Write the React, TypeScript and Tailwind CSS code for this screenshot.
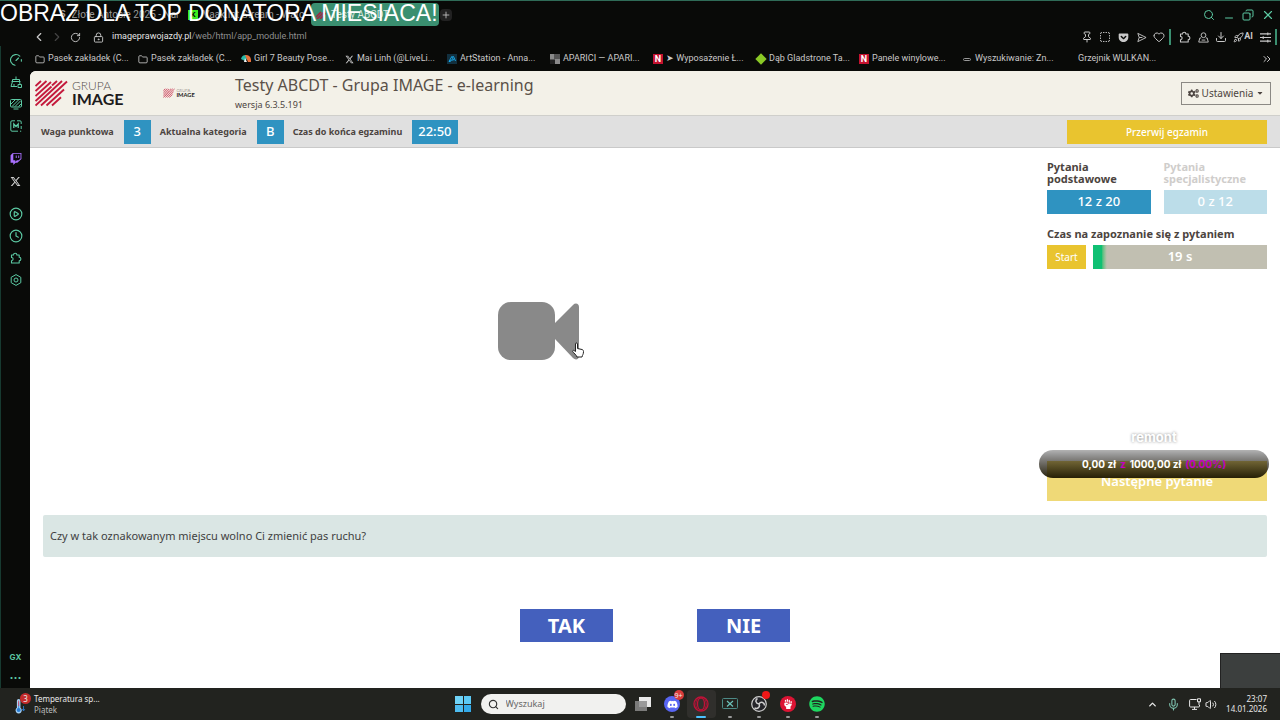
import type { ReactNode } from "react";
import {
  Search, Minus, Copy, X, ChevronLeft, ChevronRight, RotateCw, LockKeyhole, Folder, Pin, SquareDashed,
  Heart, Download, ChevronsRight, CirclePlay, Clock, ChevronUp, Mic, Volume2, Plus, Rocket,
} from "lucide-react";
import { FaCogs, FaCaretDown, FaDiscord, FaSpotify, FaTwitch, FaGetPocket } from "react-icons/fa";
import { FaXTwitter, FaHandFist } from "react-icons/fa6";

function IconButton({ label, className, children }: { label: string; className?: string; children: ReactNode }) {
  return (
    <button type="button" aria-label={label} className={`flex shrink-0 items-center justify-center ${className ?? ""}`}>
      {children}
    </button>
  );
}

function GaugeIcon() {
  return (
    <svg viewBox="0 0 12 12" className="size-3" fill="none" stroke="currentColor" strokeWidth="1.100" strokeLinecap="round">
      <path d="M5 11.300A5.400 5.400 0 1 1 9.800 2.200M6 6.500 8.500 4M11.300 5.500a5.400 5.400 0 0 1 0 1.800" />
    </svg>
  );
}

function BroomIcon() {
  return (
    <svg viewBox="0 0 12 12" className="size-3" fill="none" stroke="currentColor" strokeWidth="1">
      <path d="M6 .5v3M2.500 5.500v-2h7v2M1.500 5.500h9M2.500 5.500 1 10.500h6M4 8v2.500M9.500 5.500l.5 2.500M8 8.500h3.500v3H8z" />
    </svg>
  );
}

function WallpaperIcon() {
  return (
    <svg viewBox="0 0 12 12" className="size-3" fill="none" stroke="currentColor" strokeWidth="1">
      <rect x=".5" y="1.500" width="11" height="7.500" rx="1" />
      <path d="m1 6 4-4M2 8.500 8.500 2M5 8.500l6-6M8.500 8.500 11 6M3.500 11h5" />
    </svg>
  );
}

function ModIcon() {
  return (
    <svg viewBox="0 0 12 12" className="size-3" fill="none" stroke="currentColor" strokeWidth="1">
      <path d="M5 .8H2A1.200 1.200 0 0 0 .8 2v8A1.200 1.200 0 0 0 2 11.200h6M7 .8h3A1.200 1.200 0 0 1 11.200 2v2M11.200 6v3M10 11.200h1.200" />
      <path d="M3.800 8V4l2.200 2.500L8.200 4v4" strokeWidth="1.300" />
    </svg>
  );
}

function ExtensionIcon() {
  return (
    <svg viewBox="0 0 12 12" className="size-3" fill="none" stroke="currentColor" strokeWidth="1.100" strokeLinejoin="round">
      <path d="M1.500 3h2a1.700 1.700 0 0 1 3.400 0h2.300v2.300a1.700 1.700 0 0 1 0 3.400V11H1.500V8.700c2.200 0 2.200-3.200 0-3.200z" />
    </svg>
  );
}

function SettingsHex() {
  return (
    <svg viewBox="0 0 12 12" className="size-3" fill="none" stroke="currentColor" strokeWidth="1">
      <path d="M6 .6 10.800 3.300v5.400L6 11.400 1.200 8.700V3.300z" strokeLinejoin="round" />
      <circle cx="6" cy="6" r="2" />
    </svg>
  );
}

function PlaneIcon() {
  return (
    <svg viewBox="0 0 12 12" className="size-[11px]" fill="none" stroke="currentColor" strokeWidth="1" strokeLinejoin="round">
      <path d="M2 1.500 11 6l-9 4.500L3.500 6zM3.500 6H7" />
    </svg>
  );
}

function ProfileIcon() {
  return (
    <svg viewBox="0 0 12 12" className="size-[11px]" fill="none" stroke="currentColor" strokeWidth="1" strokeLinejoin="round">
      <circle cx="6" cy="3.500" r="2.600" />
      <path d="M3.500 6.500H2L.8 11h10.400L10 6.500H8.500M4 8.800h4" />
    </svg>
  );
}

function MenuLinesIcon() {
  return (
    <svg viewBox="0 0 12 12" className="size-[11px]" fill="none" stroke="currentColor" strokeWidth="1.200">
      <path d="M0 2h12M0 6h12M0 10h12M8.500.5v3M3.500 4.500v3M8.500 8.500v3" />
    </svg>
  );
}

function NetworkIcon() {
  return (
    <svg viewBox="0 0 12 12" className="size-3" fill="none" stroke="currentColor" strokeWidth="1">
      <path d="M7.500 1.500h-6A1 1 0 0 0 .6 2.500v5.500a1 1 0 0 0 .9 1h8a1 1 0 0 0 1-1V7M5.500 9v2M3 11.400h5M8.500.8h3v3h-3zM10 3.800V7" />
    </svg>
  );
}

function GrupaImageLogo({ className }: { className: string }) {
  return (
    <svg viewBox="0 0 94 28" className={className} role="img" aria-label="Grupa Image">
      <path
        stroke="#c41a3c"
        strokeWidth="1.900"
        fill="none"
        d="M.5 7 6 2M.5 12 11.500 2M.5 17 16 3M.5 22 16.500 7.500M.5 26.500 27 2M6 26.500 32 2.500M11.500 26.500 29 10.500M17 26.500 26 18.300M17 6.500 22 2"
      />
      <text x="37" y="11" fontSize="12" fill="#55504e" fontWeight="300" fontFamily="Lato, sans-serif">GRUPA</text>
      <text x="37" y="25.500" fontSize="16" fontWeight="700" fill="#1d1b1c" fontFamily="Lato, sans-serif">IMAGE</text>
    </svg>
  );
}

const sidebar: { label: string; icon: ReactNode; gap: string }[] = [
  { label: "Szybkość", icon: <GaugeIcon />, gap: "mt-0" },
  { label: "GX Cleaner", icon: <BroomIcon />, gap: "mt-0" },
  { label: "Tapety", icon: <WallpaperIcon />, gap: "mt-0" },
  { label: "Mody", icon: <ModIcon />, gap: "mt-0" },
  { label: "Twitch", icon: <FaTwitch className="size-3 text-[#a970ff]" />, gap: "mt-[11px]" },
  { label: "X", icon: <FaXTwitter className="size-[11px] text-[#d0d0d0]" />, gap: "mt-0" },
  { label: "Odtwarzacz", icon: <CirclePlay className="size-[14px]" />, gap: "mt-[11px]" },
  { label: "Historia", icon: <Clock className="size-[14px]" />, gap: "mt-0" },
  { label: "Rozszerzenia", icon: <ExtensionIcon />, gap: "mt-0" },
  { label: "Ustawienia", icon: <SettingsHex />, gap: "mt-0" },
];

const nIcon = <span className="flex size-[10px] items-center justify-center bg-[#c4122f] text-[9px] leading-none font-bold text-white">N</span>;

const bookmarks: { text: string; icon: ReactNode }[] = [
  { text: "Pasek zakładek (C...", icon: <Folder className="size-[11px]" /> },
  { text: "Pasek zakładek (C...", icon: <Folder className="size-[11px]" /> },
  {
    text: "Girl 7 Beauty Pose...",
    icon: (
      <svg viewBox="0 0 10 10" className="size-[10px]">
        <path d="M0 5A5 5 0 0 1 5 1l1 4-2 2z" fill="#28b8a8" />
        <path d="M4 1a5 5 0 0 1 6 5v2H7z" fill="#e8703a" />
        <path d="M4 4 6 8H3z" fill="#f4f4f4" />
      </svg>
    ),
  },
  { text: "Mai Linh (@LiveLi...", icon: <FaXTwitter className="size-[9px]" /> },
  {
    text: "ArtStation - Anna...",
    icon: (
      <svg viewBox="0 0 10 10" className="size-[10px]">
        <rect width="10" height="10" fill="#12303f" />
        <path d="M2 7.500 4.800 2.500l1.700 3.500H4l-.6 1.500zM5.500 2.500h1L8.500 7" fill="none" stroke="#18a8e8" />
      </svg>
    ),
  },
  {
    text: "APARICI — APARI...",
    icon: (
      <svg viewBox="0 0 10 10" className="size-[10px]">
        <rect width="10" height="10" fill="#555" />
        <path d="M0 0h4v5H0zM5 5h5v5H5z" fill="#8a8a8a" />
        <path d="M0 6h5v4H0z" fill="#222" />
      </svg>
    ),
  },
  { text: "➤ Wyposażenie Ł...", icon: nIcon },
  { text: "Dąb Gladstrone Ta...", icon: <span className="size-2 rotate-45 bg-[#8ac926]" /> },
  { text: "Panele winylowe...", icon: nIcon },
  { text: "Wyszukiwanie: Zn...", icon: <span className="h-[3px] w-2 rounded-full border border-[#999]" /> },
  { text: "Grzejnik WULKAN...", icon: <span /> },
];

const tools: { label: string; icon: ReactNode }[] = [
  { label: "Przypnij", icon: <Pin className="size-3" /> },
  { label: "Zrzut ekranu", icon: <SquareDashed className="size-3" /> },
  { label: "Pocket", icon: <FaGetPocket className="size-[11px]" /> },
  { label: "Wyślij", icon: <PlaneIcon /> },
  { label: "Ulubione", icon: <Heart className="size-3" /> },
];

function Browser() {
  return (
    <header className="flex flex-col bg-[#090a08] font-[Roboto,sans-serif] text-[#c9c9c9]">
      <div className="flex h-7 items-center border-t border-[#2f6b57] pr-[3px] pl-[60px] text-[10px]">
        <button type="button" className="flex w-[128px] items-center gap-[6px] overflow-hidden whitespace-nowrap text-[#9a9a9a]">
          <span className="text-[9px] font-bold">S</span>
          <span className="truncate">Złote Antosie 2025 - Nar</span>
        </button>
        <button type="button" className="flex w-[123px] items-center gap-[5px] overflow-hidden whitespace-nowrap text-[#9a9a9a]">
          <span className="flex size-[10px] shrink-0 items-center justify-center bg-[#3bea1e] text-[8px] leading-none font-bold text-black">K</span>
          <span className="truncate">Vaak.Int Stream - Watc</span>
        </button>
        <button type="button" className="flex h-[23px] w-[128px] items-center gap-[5px] rounded-sm bg-[#3a8f70] px-[5px] text-[#d9e8e0]">
          <svg viewBox="0 0 10 8" className="h-2 w-[10px]" stroke="#a32240" strokeWidth="1.500">
            <path d="M0 6 5 1M1 8 8 1M4 8l6-6" />
          </svg>
          Testy ABCDT
        </button>
        <IconButton label="Nowa karta" className="ml-[1px] size-3 rounded-sm bg-[#222]"><Plus className="size-[10px]" /></IconButton>
        <div className="ml-auto flex text-[#5cc9a3]">
          <IconButton label="Szukaj" className="w-[20px]"><Search className="size-3" /></IconButton>
          <IconButton label="Minimalizuj" className="w-[19px] pt-[7px]"><Minus className="size-3" /></IconButton>
          <IconButton label="Przywróć" className="w-[20px]"><Copy className="size-3 rotate-90" /></IconButton>
          <IconButton label="Zamknij" className="w-[19px]"><X className="size-[14px]" /></IconButton>
        </div>
      </div>
      <div className="flex h-[18px] items-center pr-[3px] pl-[30px]">
        <IconButton label="Wstecz" className="w-[18px]"><ChevronLeft className="size-[14px]" /></IconButton>
        <IconButton label="Dalej" className="w-[18px] text-[#444]"><ChevronRight className="size-[14px]" /></IconButton>
        <IconButton label="Odśwież" className="w-[18px]"><RotateCw className="size-[11px]" /></IconButton>
        <IconButton label="Połączenie" className="w-[28px]"><LockKeyhole className="size-[11px]" /></IconButton>
        <span className="text-[9px] text-[#8f8f8f]"><span className="text-[#e4e4e4]">imageprawojazdy.pl</span>/web/html/app_module.html</span>
        <div className="ml-auto flex items-center">
          {tools.map((t) => <IconButton key={t.label} label={t.label} className="w-[18px]">{t.icon}</IconButton>)}
          <span className="mr-[5px] ml-[1px] h-4 w-[2px] bg-[#3a8f70]" />
          <IconButton label="Rozszerzenia" className="w-[18px]"><ExtensionIcon /></IconButton>
          <IconButton label="Profil" className="w-[18px]"><ProfileIcon /></IconButton>
          <IconButton label="Pobrane" className="w-[18px]"><Download className="size-3" /></IconButton>
          <IconButton label="AI" className="w-[26px] text-[9px] font-bold"><Rocket className="size-[11px]" />AI</IconButton>
          <IconButton label="Menu" className="w-[18px]"><MenuLinesIcon /></IconButton>
          <span className="ml-[1px] h-4 w-[2px] bg-[#3a8f70]" />
        </div>
      </div>
    </header>
  );
}

function BookmarkBar() {
  return (
    <nav aria-label="Zakładki" className="flex h-[25px] items-center pt-px pr-[7px] pl-[5px] font-[Roboto,sans-serif] text-[9px] text-[#c9c9c9]">
      {bookmarks.map((b, i) => (
        <a key={i} href="#" className="flex w-[103px] shrink-0 items-center gap-[3px] whitespace-nowrap">
          <span className="flex w-[10px] shrink-0 justify-center">{b.icon}</span>
          {b.text}
        </a>
      ))}
      <IconButton label="Więcej zakładek" className="ml-auto"><ChevronsRight className="size-3" /></IconButton>
    </nav>
  );
}

function Stat({ label, value }: { label: string; value: string }) {
  return (
    <div className="flex items-center gap-[10px]">
      <dt className="text-[9px] font-bold text-[#4c4440]">{label}</dt>
      <dd className="flex h-6 min-w-[27px] items-center justify-center bg-[#2f93c1] px-[6px] text-[13px] font-medium text-white">{value}</dd>
    </div>
  );
}

function CameraIcon() {
  return (
    <svg viewBox="0 0 81 58" className="h-[58px] w-[81px]" fill="#898989">
      <rect width="57" height="58" rx="13" />
      <path d="M57 21 75 3c2.500-2.500 6-1.500 6 2v49c0 3.500-3.500 4.500-6 2L57 37z" />
    </svg>
  );
}

function HandCursor() {
  return (
    <svg viewBox="0 0 12 16" className="absolute top-10 left-[74px] h-4 w-3" fill="#fff" stroke="#222" strokeWidth="1" strokeLinejoin="round">
      <path d="M3.500 9.500V2a1 1 0 0 1 2 0v4.500l4.500 1c1 .3 1.500 1 1.500 2 0 3-1 3-1.500 5.500H5C4.500 13 1.500 11 .7 9.500c-.3-1 .8-1.500 1.500-.9z" />
    </svg>
  );
}

function Sidebar() {
  return (
    <nav aria-label="Pasek boczny" className="flex w-[30px] shrink-0 flex-col items-center border-l border-[#173a30] bg-[#090a08] pt-[3px] text-[#5cc9a3]">
      {sidebar.map((s) => <IconButton key={s.label} label={s.label} className={`h-[22px] w-full ${s.gap}`}>{s.icon}</IconButton>)}
      <IconButton label="GX" className="mt-auto h-[22px] w-full font-[Inter,sans-serif] text-[8px] font-bold">GX</IconButton>
      <IconButton label="Więcej" className="h-5 w-full font-[Inter,sans-serif] text-xs font-bold">···</IconButton>
    </nav>
  );
}

function Counter({ label, value, muted }: { label: string; value: string; muted?: boolean }) {
  return (
    <div className="flex flex-1 flex-col">
      <dt className={`w-[90px] text-[11px] leading-3 font-bold ${muted ? "text-[#cfcdcb]" : "text-[#4c4440]"}`}>{label}</dt>
      <dd className={`mt-[5px] flex h-6 items-center justify-center text-[13px] font-medium text-white ${muted ? "bg-[#bcdde9]" : "bg-[#2f93c1]"}`}>{value}</dd>
    </div>
  );
}

function Exam() {
  return (
    <main className="flex min-w-0 flex-1 flex-col rounded-tl-md bg-white font-['Noto_Sans',sans-serif] text-[#4c4440]">
      <header className="flex h-[45px] items-center rounded-tl-md border-b border-[#cfcfcb] bg-[#f3f1e8] pr-[9px] pl-[5px]">
        <GrupaImageLogo className="h-7 w-[94px]" />
        <GrupaImageLogo className="ml-[34px] h-[10px] w-[34px]" />
        <div className="ml-[38px] flex flex-col">
          <h1 className="text-[16px] leading-6 text-[#5a5048]">Testy ABCDT - Grupa IMAGE - e-learning</h1>
          <p className="text-[9px] leading-4">wersja 6.3.5.191</p>
        </div>
        <button type="button" className="ml-auto flex h-[23px] w-[90px] items-center justify-center gap-[3px] border border-[#8b8984] text-[10px]">
          <FaCogs className="size-[11px]" />Ustawienia<FaCaretDown className="size-2" />
        </button>
      </header>
      <div className="flex h-8 items-center border-b border-[#c9c9c9] bg-[#e0e0e0] pt-px pr-[13px] pl-[11px]">
        <dl className="flex gap-[9px]">
          <Stat label="Waga punktowa" value="3" />
          <Stat label="Aktualna kategoria" value="B" />
          <Stat label="Czas do końca egzaminu" value="22:50" />
        </dl>
        <button type="button" className="ml-auto h-6 w-[200px] bg-[#e9c42f] text-[10px] font-medium text-white">Przerwij egzamin</button>
      </div>

      <div className="flex flex-1 flex-col px-[13px] pt-[13px]">
        <div className="flex min-h-[340px] gap-[14px]">
          <section aria-label="Film" className="flex flex-1 items-center justify-center">
            <button type="button" aria-label="Odtwórz film" className="relative">
              <CameraIcon />
              <HandCursor />
            </button>
          </section>
          <aside className="flex w-[220px] shrink-0 flex-col">
            <dl className="flex gap-[13px]">
              <Counter label="Pytania podstawowe" value="12 z 20" />
              <Counter label="Pytania specjalistyczne" value="0 z 12" muted />
            </dl>
            <h2 className="mt-[11px] text-[11px] leading-[18px] font-bold">Czas na zapoznanie się z pytaniem</h2>
            <div className="mt-[2px] flex gap-[7px]">
              <button type="button" className="h-6 w-[39px] bg-[#e9c42f] text-[10px] text-white">Start</button>
              <div role="timer" className="flex h-6 flex-1 items-center justify-center bg-linear-to-r from-[#0fc073] from-5% to-[#c1bfb1] to-8% text-[13px] font-semibold text-white">19 s</div>
            </div>
            <div className="relative mt-auto">
              <button type="button" className="h-10 w-full bg-[#efd977] pt-px text-[13px] font-semibold text-white">Następne pytanie</button>
              <div className="absolute inset-x-[-8px] bottom-[23px] flex w-[230px] flex-col items-center gap-[5px] font-[Inter,sans-serif] font-bold text-white">
                <span className="text-[13px] leading-4 [text-shadow:0_0_3px_#888]">remont</span>
                <span className="flex h-7 w-full items-center justify-center gap-1 rounded-full bg-linear-to-b from-black/30 to-[#1c1600]/95 text-[10px]">
                  <span>0,00 zł</span><span className="text-[#c400c4]">z</span><span>1000,00 zł</span><span className="text-[#c400c4]">(0.00%)</span>
                </span>
              </div>
            </div>
          </aside>
        </div>
        <p className="mt-[14px] flex min-h-[42px] items-center rounded-xs bg-[#dae6e4] px-[7px] text-[11px] text-[#3f3f3f]">Czy w tak oznakowanym miejscu wolno Ci zmienić pas ruchu?</p>
        <div className="mt-[52px] flex justify-center gap-[84px]">
          <button type="button" className="h-[33px] w-[93px] bg-[#4460bd] text-[20px] font-bold text-white">TAK</button>
          <button type="button" className="h-[33px] w-[93px] bg-[#4460bd] text-[20px] font-bold text-white">NIE</button>
        </div>
      </div>
    </main>
  );
}

function TaskApp({ label, active, running, children }: { label: string; active?: boolean; running?: boolean; children: ReactNode }) {
  return (
    <button type="button" aria-label={label} className={`relative flex h-7 w-[29px] items-center justify-center rounded-sm ${active ? "bg-[#302f2c]" : ""}`}>
      {children}
      {running && <span className={`absolute bottom-0 h-[2px] rounded-full ${active ? "w-[10px] bg-[#4cc2ff]" : "w-1 bg-[#9a9a9a]"}`} />}
    </button>
  );
}

function Taskbar() {
  return (
    <footer className="grid h-8 shrink-0 grid-cols-[1fr_auto_1fr] items-center bg-[#22231f] font-['Noto_Sans',sans-serif] text-[8px] text-[#e8e8e8]">
      <button type="button" className="flex items-center gap-[3px] pl-[14px] text-left">
        <span className="relative h-5 w-[17px]">
          <svg viewBox="0 0 12 18" className="mt-1 h-4 w-3">
            <path d="M2.500 3a2 2 0 0 1 4 0v8a3.500 3.500 0 1 1-4 0z" fill="#a9d3f5" />
            <circle cx="4.500" cy="13.500" r="2.300" fill="#2b7fd6" />
            <path d="M4.500 5v8M10 9v5M8.500 12.500 10 14.500l1.500-2" stroke="#2b7fd6" fill="none" />
            <path d="M4.500 3v6" stroke="#d8405a" />
          </svg>
          <span className="absolute -top-px right-0 flex size-[11px] items-center justify-center rounded-full bg-[#c42b2b] leading-none">3</span>
        </span>
        <span className="flex flex-col leading-[11px]">
          <span>Temperatura sp...</span>
          <span className="text-[#bdbdbd]">Piątek</span>
        </span>
      </button>
      <div className="flex items-center">
        <TaskApp label="Start">
          <span className="grid size-4 grid-cols-2 gap-px">
            <span className="bg-[#6fd3f7]" /><span className="bg-[#5cc9f5]" /><span className="bg-[#4ebcf0]" /><span className="bg-[#33aaea]" />
          </span>
        </TaskApp>
        <label className="mr-[3px] ml-[3px] flex h-5 w-[145px] items-center gap-[7px] rounded-full bg-[#f1f1ef] px-[7px] text-[#333]">
          <Search className="size-[11px] shrink-0" strokeWidth={2.5} />
          <input aria-label="Wyszukaj" placeholder="Wyszukaj" className="min-w-0 flex-1 bg-transparent text-[9px] outline-none placeholder:text-[#666]" />
        </label>
        <TaskApp label="Widok zadań">
          <svg viewBox="0 0 16 14" className="h-[14px] w-4">
            <path d="M4 0h12v10H4z" fill="#e8e8e8" />
            <path d="M0 4h12v10H0z" fill="#8b8b8b" fillOpacity=".85" />
          </svg>
        </TaskApp>
        <TaskApp label="Discord" running>
          <span className="flex size-4 items-center justify-center rounded-full bg-[#5865f2]"><FaDiscord className="size-[11px] text-white" /></span>
          <span className="absolute top-0 right-[3px] flex size-[10px] items-center justify-center rounded-full bg-[#d83b3b] text-[7px] leading-none">9+</span>
        </TaskApp>
        <TaskApp label="Opera GX" active running>
          <svg viewBox="0 0 16 16" className="size-4" fill="none" stroke="#c01238" strokeWidth="1.300">
            <circle cx="8" cy="8" r="7" /><ellipse cx="8" cy="8" rx="3.500" ry="6" />
            <path d="M11 2.500c3 3 3 8 0 11M5 2.500c-3 3-3 8 0 11" strokeWidth=".8" />
          </svg>
        </TaskApp>
        <TaskApp label="Monitor" running>
          <svg viewBox="0 0 16 12" className="h-3 w-4" fill="none" stroke="#4d8a86">
            <rect x=".5" y=".5" width="15" height="10" rx="1" />
            <path d="m5 3 6 5.500M11 3 5 8.500" stroke="#6cc3bb" strokeWidth="1.200" />
          </svg>
        </TaskApp>
        <TaskApp label="OBS Studio" running>
          <svg viewBox="0 0 16 16" className="size-4" fill="none" stroke="#cfcfcf" strokeWidth="1.200">
            <circle cx="8" cy="8" r="7.300" fill="#25252a" />
            <path d="M8 8C4.500 7.500 4 4 6.500 2.500M8 8c2-3 5.500-1.500 5.500 1.500M8 8c1.500 3-1.500 5.500-4.500 4" strokeWidth="1.500" />
          </svg>
          <span className="absolute top-px right-1 size-2 rounded-full bg-[#f01818]" />
        </TaskApp>
        <TaskApp label="Fist" running>
          <span className="flex size-4 items-center justify-center rounded-full bg-[#dc1434]"><FaHandFist className="size-[10px] text-white" /></span>
        </TaskApp>
        <TaskApp label="Spotify" running><FaSpotify className="size-4 text-[#1ed760]" /></TaskApp>
      </div>
      <div className="flex items-center justify-end pr-[13px]">
        <IconButton label="Ukryte ikony" className="w-5"><ChevronUp className="size-[11px]" strokeWidth={3} /></IconButton>
        <IconButton label="Mikrofon" className="w-[22px] text-[#7fc4b0]"><Mic className="size-[13px]" /></IconButton>
        <IconButton label="Sieć" className="w-[21px]"><NetworkIcon /></IconButton>
        <IconButton label="Głośność" className="w-3"><Volume2 className="size-[13px]" /></IconButton>
        <time className="ml-[9px] text-right leading-[10px]">23:07<br />14.01.2026</time>
      </div>
    </footer>
  );
}

export default function App() {
  return (
    <div className="relative flex min-h-screen flex-col overflow-hidden bg-[#090a08]">
      <Browser />
      <div className="flex flex-1">
        <Sidebar />
        <div className="flex min-w-0 flex-1 flex-col">
          <BookmarkBar />
          <Exam />
        </div>
      </div>
      <Taskbar />
      <p className="absolute top-0 left-0 font-['Liberation_Sans',sans-serif] text-[23px] leading-[26px] whitespace-nowrap text-white">OBRAZ DLA TOP DONATORA MIESIACA!</p>
      <div className="absolute right-0 bottom-8 h-[35px] w-[60px] border-t border-l border-[#222] bg-[#3c3f3e]" />
    </div>
  );
}
